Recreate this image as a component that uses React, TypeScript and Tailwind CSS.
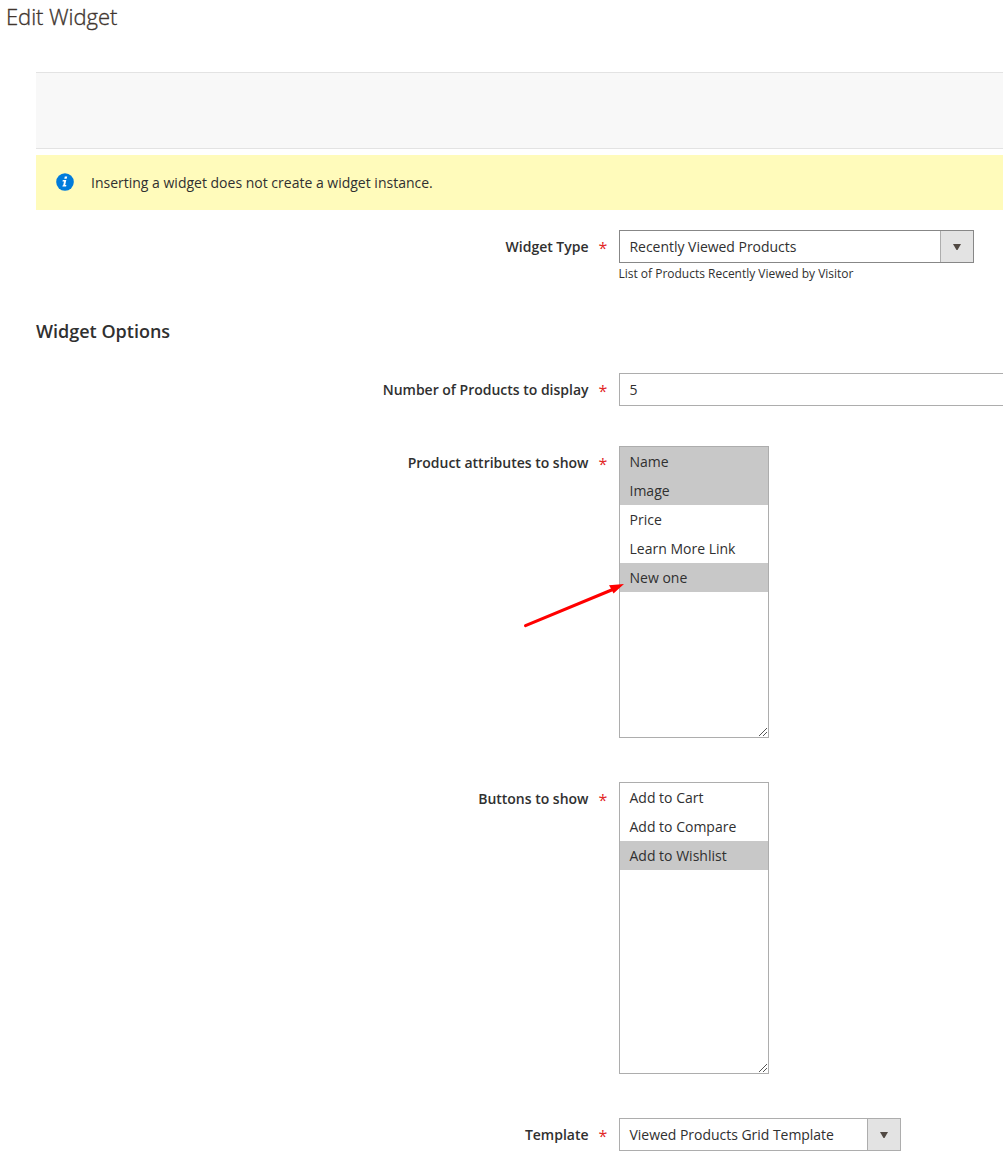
import React from "react";

function Label({ children }: { children: string }) {
  return (
    <div className="flex w-[606.5px] shrink-0 justify-end text-[14px] leading-[33px] font-semibold">
      <span className="tracking-[-0.01px]">{children}</span>
      <span className="ml-[10px] w-[8px] pt-[2px] text-center text-[16px] font-normal text-[#e22626]">*</span>
    </div>
  );
}

function Select({ value, className }: { value: string; className: string }) {
  return (
    <div className={"flex h-[33px] border text-[14px] leading-[31px] " + className}>
      <div className="flex-1 pl-[9.5px] tracking-[-0.03px]">{value}</div>
      <div className="flex w-[33px] items-center justify-center border-l border-[#adadad] bg-[#e3e3e3]">
        <svg width="8" height="6" viewBox="0 0 8 6">
          <path d="M0 0H8L4.500 6H3.500Z" fill="#514943" />
        </svg>
      </div>
    </div>
  );
}

function MultiSelect({ items, selected }: { items: string[]; selected: number[] }) {
  return (
    <div className="relative h-[292px] w-[150px] border border-[#adadad]">
      {items.map((t, i) => (
        <div
          key={t}
          className={"h-[29px] pl-[9.5px] text-[14px] leading-[29px] " + (selected.includes(i) ? "bg-[#c8c8c8]" : "")}
        >
          {t}
        </div>
      ))}
      <svg className="absolute right-[1px] bottom-[1px]" width="8" height="8" viewBox="0 0 8 8" stroke="#555" fill="none">
        <path d="M0 8L8 0M4 8L8 4" />
      </svg>
    </div>
  );
}

export default function App() {
  return (
    <div className="relative h-[1162px] w-[1003px] overflow-hidden bg-white font-['Open_Sans',sans-serif] text-[#303030]">
      <h1 className="h-[72px] pl-[6px] text-[22px] leading-[33px] font-light tracking-[-0.05px] text-[#41362f] [-webkit-text-stroke:0.35px_#41362f]">Edit Widget</h1>
      <div className="ml-[36px] h-[77px] border-y border-[#e3e3e3] bg-[#f8f8f8]" />
      <div className="mt-[6px] ml-[36px] flex h-[55px] items-center bg-[#fffbbb] pl-[20px] text-[14px]">
        <svg className="-mt-px -ml-[0.5px]" width="18" height="18" viewBox="0 0 18 18">
          <circle cx="9" cy="9" r="8.8" fill="#007bdb" />
          <path d="M8.800 3.500h2.400l-.5 2.200H8.300zM6.800 7H10.300l-1.100 5h1.200l-.3 1.500H6.400l.3-1.300h.5L8 8.400H6.500z" fill="#fff" />
        </svg>
        <span className="ml-[17.5px]">Inserting a widget does not create a widget instance.</span>
      </div>
      <div className="mt-[20px] flex h-[86px]">
        <Label>Widget Type</Label>
        <div className="ml-[12.5px]">
          <Select value="Recently Viewed Products" className="w-[355px] border-[#878787]" />
          <div className="-ml-[0.5px] text-[12px] leading-[21px] tracking-[-0.01px]">List of Products Recently Viewed by Visitor</div>
        </div>
      </div>
      <h2 className="ml-[36px] h-[57px] text-[18px] leading-[30px] font-semibold">Widget Options</h2>
      <div className="flex h-[73px]">
        <Label>Number of Products to display</Label>
        <div className="ml-[12.5px] h-[33px] flex-1 border border-r-0 border-[#adadad] pl-[9.5px] text-[14px] leading-[31px]">5</div>
      </div>
      <div className="flex h-[336px]">
        <Label>Product attributes to show</Label>
        <div className="ml-[12.5px]">
          <MultiSelect items={["Name", "Image", "Price", "Learn More Link", "New one"]} selected={[0, 1, 4]} />
        </div>
      </div>
      <div className="flex h-[336px]">
        <Label>Buttons to show</Label>
        <div className="ml-[12.5px]">
          <MultiSelect items={["Add to Cart", "Add to Compare", "Add to Wishlist"]} selected={[2]} />
        </div>
      </div>
      <div className="flex">
        <Label>Template</Label>
        <div className="ml-[12.5px]">
          <Select value="Viewed Products Grid Template" className="w-[282px] border-[#adadad]" />
        </div>
      </div>
      <svg className="absolute top-[578px] left-[520px]" width="110" height="54" viewBox="0 0 110 54">
        <path d="M5.500 47.700L94 11" stroke="#ff0000" strokeWidth="3" strokeLinecap="round" />
        <path d="M104 6L89 7.300L91.500 11.500L93.500 15.500Z" fill="#ff0000" />
      </svg>
    </div>
  );
}
